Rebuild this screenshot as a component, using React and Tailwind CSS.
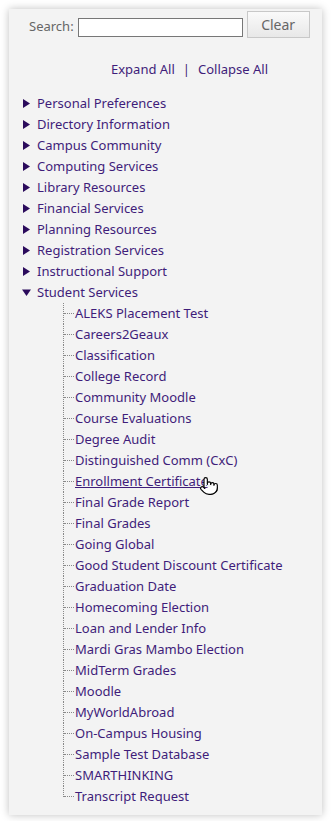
import { Pointer } from "lucide-react";

const sections = [
  "Personal Preferences",
  "Directory Information",
  "Campus Community",
  "Computing Services",
  "Library Resources",
  "Financial Services",
  "Planning Resources",
  "Registration Services",
  "Instructional Support",
];

const studentLinks = [
  "ALEKS Placement Test",
  "Careers2Geaux",
  "Classification",
  "College Record",
  "Community Moodle",
  "Course Evaluations",
  "Degree Audit",
  "Distinguished Comm (CxC)",
  "Enrollment Certificate",
  "Final Grade Report",
  "Final Grades",
  "Going Global",
  "Good Student Discount Certificate",
  "Graduation Date",
  "Homecoming Election",
  "Loan and Lender Info",
  "Mardi Gras Mambo Election",
  "MidTerm Grades",
  "Moodle",
  "MyWorldAbroad",
  "On-Campus Housing",
  "Sample Test Database",
  "SMARTHINKING",
  "Transcript Request",
];

function Arrow({ open }) {
  return (
    <svg width="9" height="9" viewBox="0 0 9 9" className="shrink-0">
      {open ? <path d="M0 1.5 L9 1.5 L4.5 8 Z" fill="#2b0b5c" /> : <path d="M1 0 L8 4.5 L1 9 Z" fill="#2b0b5c" />}
    </svg>
  );
}

export default function App() {
  return (
    <div className="min-h-screen bg-white p-[9px] font-['Noto_Sans',sans-serif] text-[13px]">
      <div className="bg-[#f3f3f3] shadow-[0_0_8px_rgba(0,0,0,0.25)] pb-[8px]">
        {/* search */}
        <div className="flex items-end pt-[2px] pl-[20px]">
          <label className="text-[#666] mb-[2px] mr-[4px]">Search:</label>
          <input className="w-[165px] h-[19px] bg-white border border-[#777] mb-[1px]" type="text" />
          <button className="ml-[4px] w-[63px] h-[27px] border border-[#c8c8c8] bg-gradient-to-b from-[#fafafa] to-[#e8e8e8] text-[#666] text-[14px]">
            Clear
          </button>
        </div>

        <div className="pl-[102px] mt-[22px] text-[#3f1d7a] flex items-center h-[20px]">
          <span>Expand All</span>
          <span className="mx-[8px]">|</span>
          <span>Collapse All</span>
        </div>

        {/* tree */}
        <ul className="mt-[13px] text-[#3f1d7a]">
          {sections.map((s) => (
            <li key={s} className="flex items-center h-[21px] pl-[13px]">
              <Arrow />
              <span className="ml-[6px]">{s}</span>
            </li>
          ))}
          <li className="flex items-center h-[21px] pl-[13px]">
            <Arrow open />
            <span className="ml-[6px]">Student Services</span>
          </li>
          <ul>
            {studentLinks.map((s, i) => (
              <li key={s} className="relative flex items-center h-[21px] pl-[66px]">
                <span
                  className={`absolute left-[54px] top-0 border-l border-dotted border-[#888] ${
                    i === studentLinks.length - 1 ? "h-[11px]" : "h-[21px]"
                  }`}
                />
                <span className="absolute left-[55px] top-[10px] w-[10px] border-t border-dotted border-[#888]" />
                <span className={s === "Enrollment Certificate" ? "underline" : ""}>{s}</span>
                {s === "Enrollment Certificate" && (
                  <Pointer className="absolute left-[190px] top-[5px]" size={20} fill="white" color="black" strokeWidth={1.4} />
                )}
              </li>
            ))}
          </ul>
        </ul>
      </div>
    </div>
  );
}
